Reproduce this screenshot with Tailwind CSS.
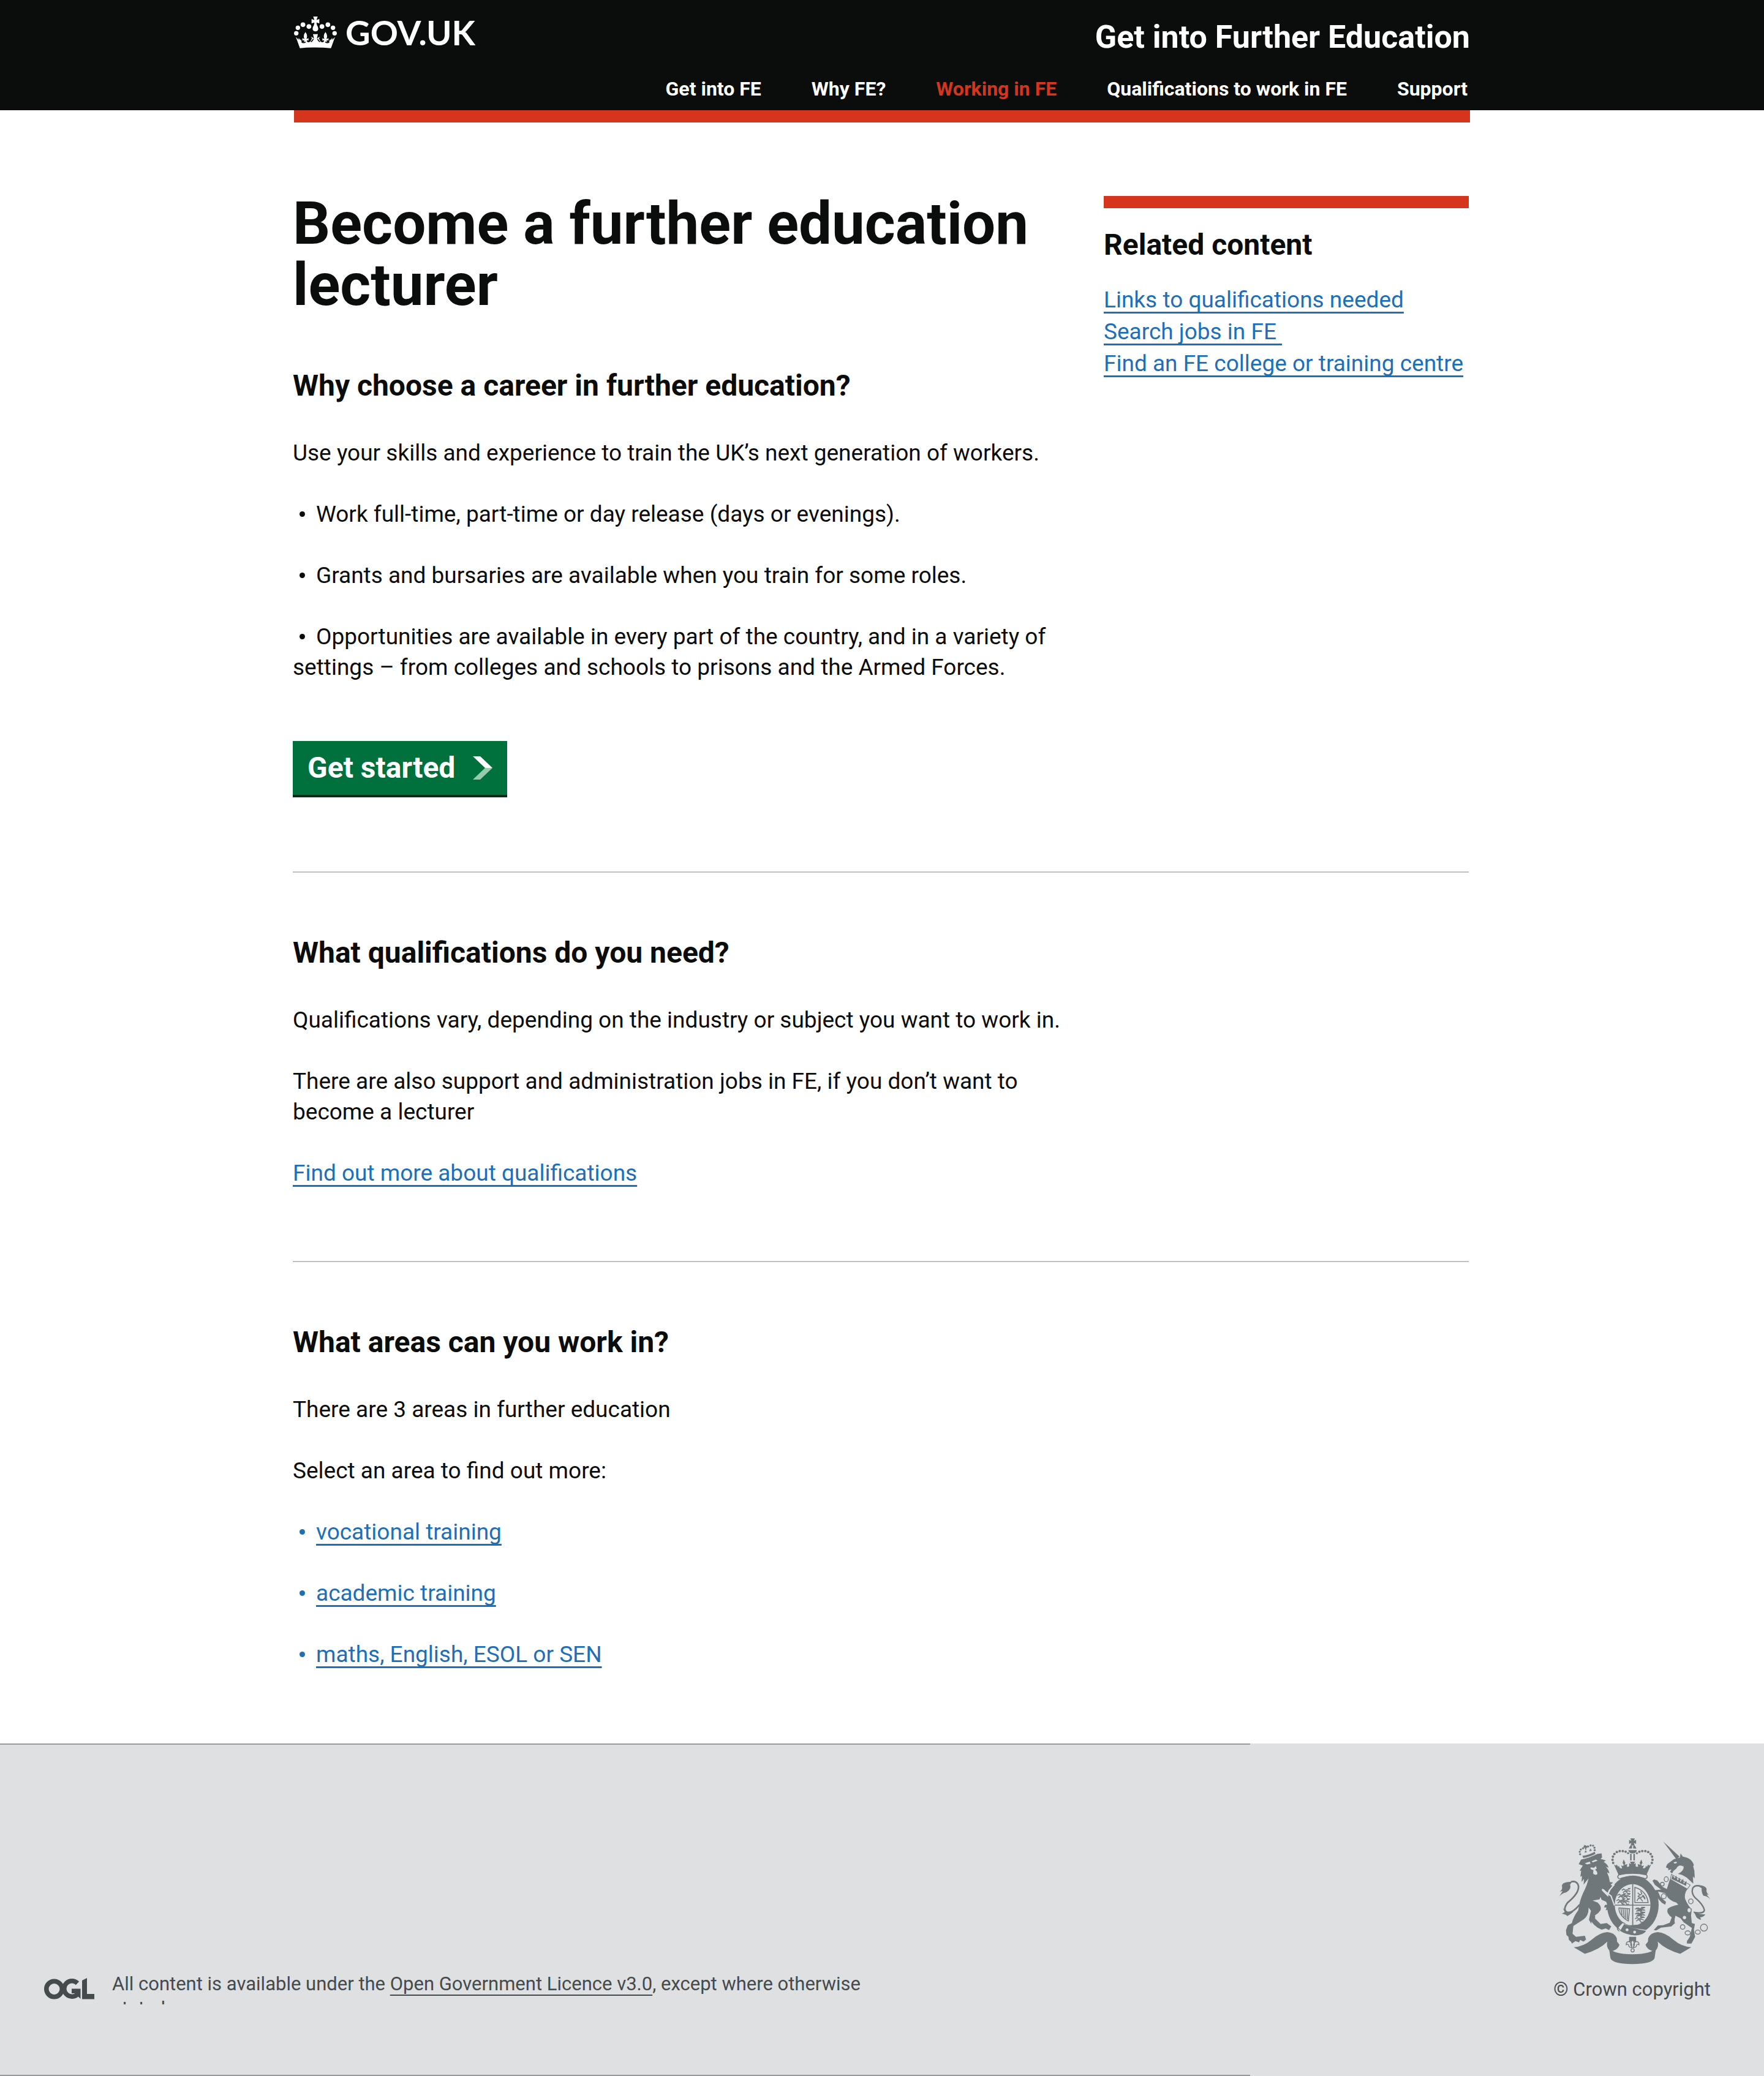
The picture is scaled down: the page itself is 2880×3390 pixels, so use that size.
<!DOCTYPE html>
<html lang="en">
<head>
<meta charset="utf-8">
<meta name="viewport" content="width=device-width, initial-scale=1">
<title>Become a further education lecturer - Get into Further Education - GOV.UK</title>
<script src="https://cdn.jsdelivr.net/npm/@tailwindcss/browser@4"></script>
</head>
<body class="flex min-h-screen flex-col bg-white font-[Roboto,'Liberation_Sans',sans-serif] text-[37px] leading-[50px] text-[#0b0c0c]">

<header class="bg-[#0b0c0c] text-white">
  <div class="mx-auto flex max-w-[1920px] items-start justify-between">
    <a href="#" class="flex items-center gap-[14px] pt-[23px]">
      <svg class="h-[52px] w-[70px]" viewBox="29 20 210 156" fill="#fff" aria-hidden="true">
        <circle cx="40" cy="102" r="11"/><circle cx="48" cy="75" r="11"/><circle cx="73" cy="60" r="11.5"/><circle cx="102" cy="69" r="11.5"/>
        <circle cx="228" cy="102" r="11"/><circle cx="220" cy="75" r="11"/><circle cx="195" cy="60" r="11.5"/><circle cx="166" cy="69" r="11.5"/>
        <path d="M123 20h22l-6 17 14-5v22l-14-5 2 12q8 12 7 20-2 12-14 12t-14-12q-1-8 7-20l2-12-14 5V32l14 5z"/>
        <path d="M38 120l13 14 1-10 8 12 2-6q4 16 12 16 8-2 4-10l-8 2v-12l10 4q-8-17 5-34 13 17 5 34l10-4v12l-8-2q-2 9 7 10 11 0 16-16l2-4-6-6q8 0 12 6l4 2-5-22h24l-5 22 4-2q4-6 12-6l-6 6 2 4q5 16 16 16 9-1 7-10l-8 2v-12l10 4q-8-17 5-34 13 17 5 34l10-4v12l-8-2q-4 8 4 10 8 0 12-16l2 6 8-12 1 10 13-14-20 55q-76-7-152 0z"/>
        <path d="M66 144q10 8 20 0M112 144q8-6 12-14M156 144q-8-6-12-14M182 144q10 8 20 0" fill="none" stroke="#0b0c0c" stroke-width="5"/>
      </svg>
      <span class="font-[Lato,sans-serif] text-[56px] leading-[60px] font-bold">GOV.UK</span>
    </a>
    <div class="flex flex-col items-end gap-[34px] pt-[31px] pb-[15px] font-bold">
      <a href="#" class="text-[52px] leading-[60px]">Get into Further Education</a>
      <nav aria-label="Main" class="flex gap-[82px] pr-[4px] text-[32px] leading-10">
        <a href="#">Get into FE</a>
        <a href="#">Why FE?</a>
        <a href="#" aria-current="page" class="text-[#d4351c]">Working in FE</a>
        <a href="#">Qualifications to work in FE</a>
        <a href="#">Support</a>
      </nav>
    </div>
  </div>
</header>
<div class="mx-auto h-5 w-full max-w-[1920px] bg-[#d4351c]"></div>

<main class="mx-auto w-full max-w-[1924px] grow pr-1">
  <section class="flex items-start justify-between gap-[52px] border-b-2 border-[#bfc1c3] pb-[121px]">
    <div class="flex-1 pt-[115px]">
      <h1 class="mb-[90px] text-[96px] leading-[100px] font-bold">Become a further education lecturer</h1>
      <h2 class="mb-[60px] text-[48px] leading-[50px] font-bold">Why choose a career in further education?</h2>
      <p class="mb-[50px]">Use your skills and experience to train the UK’s next generation of workers.</p>
      <ul class="mb-[95px] flex flex-col gap-[50px]">
        <li class="before:mr-[18px] before:mb-[6px] before:ml-[11px] before:inline-block before:size-[9px] before:rounded-full before:bg-current before:align-middle before:content-['']">Work full-time, part-time or day release (days or evenings).</li>
        <li class="before:mr-[18px] before:mb-[6px] before:ml-[11px] before:inline-block before:size-[9px] before:rounded-full before:bg-current before:align-middle before:content-['']">Grants and bursaries are available when you train for some roles.</li>
        <li class="before:mr-[18px] before:mb-[6px] before:ml-[11px] before:inline-block before:size-[9px] before:rounded-full before:bg-current before:align-middle before:content-['']">Opportunities are available in every part of the country, and in a variety of settings – from colleges and schools to prisons and the Armed Forces.</li>
      </ul>
      <button type="button" class="flex items-center gap-[29px] border-b-4 border-[#002d18] bg-[#00703c] px-[24px] text-[48px] leading-[88px] font-bold text-white">
        Get started
        <svg class="h-[38px] w-8" viewBox="0 0 32 38" aria-hidden="true"><path d="M0 0h12l20 19H20z" fill="#fff"/><path d="M20 19h12L12 38H0z" fill="#97cbae"/></svg>
      </button>
    </div>
    <aside class="mt-[120px] w-[596px] border-t-20 border-[#d4351c] pt-[35px]">
      <h2 class="mb-[39px] text-[48px] leading-[50px] font-bold">Related content</h2>
      <ul class="leading-[52px] whitespace-nowrap text-[#1d70b8]">
        <li><a href="#" class="underline decoration-[3px] underline-offset-[7px] [text-decoration-skip-ink:none]">Links to qualifications needed</a></li>
        <li><a href="#" class="underline decoration-[3px] underline-offset-[7px] [text-decoration-skip-ink:none]">Search jobs in FE&nbsp;</a></li>
        <li><a href="#" class="underline decoration-[3px] underline-offset-[7px] [text-decoration-skip-ink:none]">Find an FE college or training centre</a></li>
      </ul>
    </aside>
  </section>

  <section class="border-b-2 border-[#bfc1c3] pt-[106px] pb-[118px]">
    <div class="max-w-[1272px]">
      <h2 class="mb-[60px] text-[48px] leading-[50px] font-bold">What qualifications do you need?</h2>
      <p class="mb-[50px]">Qualifications vary, depending on the industry or subject you want to work in.</p>
      <p class="mb-[50px]">There are also support and administration jobs in FE, if you don’t want to become a lecturer</p>
      <p><a href="#" class="text-[#1d70b8] underline decoration-[3px] underline-offset-[7px] [text-decoration-skip-ink:none]">Find out more about qualifications</a></p>
    </div>
  </section>

  <section class="pt-[106px] pb-[120px]">
    <h2 class="mb-[60px] text-[48px] leading-[50px] font-bold">What areas can you work in?</h2>
    <p class="mb-[50px]">There are 3 areas in further education</p>
    <p class="mb-[50px]">Select an area to find out more:</p>
    <ul class="flex flex-col gap-[50px] text-[#1d70b8]">
      <li class="before:mr-[18px] before:mb-[6px] before:ml-[11px] before:inline-block before:size-[9px] before:rounded-full before:bg-current before:align-middle before:content-['']"><a href="#" class="underline decoration-[3px] underline-offset-[7px] [text-decoration-skip-ink:none]">vocational training</a></li>
      <li class="before:mr-[18px] before:mb-[6px] before:ml-[11px] before:inline-block before:size-[9px] before:rounded-full before:bg-current before:align-middle before:content-['']"><a href="#" class="underline decoration-[3px] underline-offset-[7px] [text-decoration-skip-ink:none]">academic training</a></li>
      <li class="before:mr-[18px] before:mb-[6px] before:ml-[11px] before:inline-block before:size-[9px] before:rounded-full before:bg-current before:align-middle before:content-['']"><a href="#" class="underline decoration-[3px] underline-offset-[7px] [text-decoration-skip-ink:none]">maths, English, ESOL or SEN</a></li>
    </ul>
  </section>
</main>

<footer class="bg-[#dee0e2] text-[31px] leading-10 text-[#454a4c]">
  <div class="h-[2px] w-[2041px] max-w-full bg-[#999]"></div>
  <div class="flex items-end justify-between pt-[153px] pr-[87px] pb-[115px] pl-[72px]">
    <div class="flex items-start gap-[29px]">
      <svg class="mt-[10px] h-[35px] w-[82px]" viewBox="0 0 82 35" role="img" aria-label="Open Government Licence" fill="#454a4c">
        <circle cx="16.5" cy="18" r="12.75" fill="none" stroke="#454a4c" stroke-width="7.5"/>
        <path d="M54.5 8.5A12.75 12.75 0 1 0 55 26" fill="none" stroke="#454a4c" stroke-width="7.5"/>
        <path d="M45 17.500h14.500V34L56 30.500 50 25H45zM62 4l8-4v26h12v8.500H62z"/>
      </svg>
      <p class="h-[53px] max-w-[1260px] overflow-hidden">All content is available under the <a href="#" class="underline decoration-2 underline-offset-[7px] [text-decoration-skip-ink:none]">Open Government Licence v3.0</a>, except where otherwise stated</p>
    </div>
    <a href="#" class="flex flex-col items-end gap-[21px] pb-1">
      <svg class="h-[206px] w-[249px]" viewBox="138 65 744 615" fill="#6f777b" aria-hidden="true">
        <!-- ribbon -->
        <path id="fold" d="M214 596Q262 592 300 560 342 523 378 522 412 524 424 552L425 568 437 584Q430 606 404 614L388 612Q370 592 378 568 340 606 268 628z"/>
        <use href="#fold" transform="matrix(-1 0 0 1 1001 0)"/>
        <path d="M385 595Q402 630 500 630T616 595L608 650Q596 678 500 678T393 650z"/>
        <!-- garter and shield -->
        <path fill-rule="evenodd" d="M502 246a126 143 0 1 0 .1 0zM501 288a87 101 0 1 1-.1 0z"/>
        <path d="M499 288h5v202h-5zM414 388h174v5H414z"/>
        <path d="M432 500L455 474Q475 496 520 505L572 512 535 545 470 545z" fill="#dee0e2"/>
        <path d="M440 516L460 482Q500 505 567 516 555 536 515 538 470 536 440 516zM490 488l34-2 2 16-30-6z"/>
        <path d="M436 518q-16-8-6-34 12-16 34-4" fill="none" stroke="#6f777b" stroke-width="4"/>
        <circle cx="474" cy="511" r="7" fill="#dee0e2"/><circle cx="511" cy="522" r="7" fill="#dee0e2"/>
        <g fill="none" stroke="#6f777b" stroke-width="4.500">
          <path id="beast" d="M448 318l10-6 8 6 12-4 12-6M454 330l8-8 10 4 4 8 12 0M466 324l14-4 10 4M478 308l10 4"/>
          <use href="#beast" y="26"/><use href="#beast" x="-4" y="52"/><use href="#beast" x="-22" y="25"/><use href="#beast" x="-26" y="51"/>
          <use href="#beast" x="65" y="92"/><use href="#beast" x="65" y="116"/><use href="#beast" x="65" y="139"/><use href="#beast" x="72" y="92"/><use href="#beast" x="72" y="116"/>
          <path d="M512 304V378H577Q568 320 512 304z"/>
          <path d="M522 370l8-14 12 4 8 12M526 330l10 10-8 8 14 6 12-10 8 14M540 322l6 12-8 8M548 342l14 20"/>
          <path d="M432 404l54 4-6 62M434 404q0 22 16 40t28 22M444 408l6 32M454 408l6 42M464 410l4 46M474 410l2 50"/>
        </g>
        <path d="M484 545h34v28l-17-10-17 10z"/>
        <g fill="none" stroke="#6f777b" stroke-width="4"><path d="M501 560q-16 18-4 36h8q12-18-4-36zM496 594q4-26-16-26-12 4-10 16 8-6 12 2 0 10 14 12zM506 594q-4-26 16-26 12 4 10 16-8-6-12 2 0 10-14 12z"/><circle cx="501" cy="611" r="8"/></g>
        <!-- centre crown -->
        <path d="M490 65h22l-5 12 11-5v20l-11-5 4 12h-20l4-12-11 5V72l11 5zM490 100h8v14h-16zM504 100h8l8 14h-16zM480 122h42q-4 16-21 16t-21-16zM489 140h7v32h-7zM505 140h7v32h-7z"/>
        <g id="arch"><circle cx="406" cy="184" r="6"/><circle cx="403" cy="169" r="6"/><circle cx="405" cy="154" r="6"/><circle cx="412" cy="141" r="6"/><circle cx="424" cy="131" r="6"/><circle cx="438" cy="127" r="6"/><circle cx="453" cy="127" r="6"/><circle cx="467" cy="130" r="6"/><circle cx="479" cy="137" r="5"/>
        <path d="M457 168l9 16-5 10 14-4-2 14 24-4 4 14v22q-38 0-68 8l-23-52 10 6 4-6 6 12 4-6q4 18 16 12l-5-14 9 4 4-6-6-10z"/></g>
        <use href="#arch" transform="matrix(-1 0 0 1 1001 0)"/>
        <path d="M488 178h26l-8 12 10-4v20l-10-4 8 14h-26l6-14-10 4v-20l10 4z"/>
        <path d="M434 242q67-14 134 0 10 12-4 20M436 262q-14-8-2-20M438 262q60-22 126 0" fill="none" stroke="#6f777b" stroke-width="5"/>
        <!-- lion -->
        <path d="M250 168Q290 160 330 140L350 138 352 158 344 164 370 172 360 180Q378 190 384 208L370 202Q384 216 388 236L376 230Q386 250 390 278L406 280 394 290 402 296Q384 316 378 332L360 312 350 318 378 346 400 364 404 382 414 400 408 418 396 408 398 418 382 411 370 416 374 402 362 402 366 390 378 388 372 374 350 364 344 350 340 362 306 368 330 378Q352 398 344 416 334 432 318 440V456L345 482 375 478 397 494 386 512 370 504 350 510 330 500 312 485 300 470V482L288 462Q292 440 298 418L286 402Q288 440 262 460L212 492 208 530 225 545 268 540 274 558 262 568 245 560 240 572 222 566 205 578 200 568 190 560 188 545 178 535 176 512 185 488 205 478Q210 450 236 415 242 370 260 330 278 298 286 260L262 290 264 262 252 278 254 248 246 252 250 222 242 222 258 198 238 190z"/>
        <path d="M268 186l24-8 4 10-18 4zM302 176l20-8 8 6-24 8zM296 206l16 2 10-8 4 12-8 6q14 10 10 22-12 6-20-4l2-16-14-6z" fill="#dee0e2"/>
        <path d="M384 322L412 290M352 312L396 346 412 392" fill="none" stroke="#dee0e2" stroke-width="6"/>
        <path d="M256 150q30-2 60-20l4 10q-30 16-60 20zM266 134l6-12 6 10zM290 128l4-14 8 10zM268 96l8 6 4-4v14l-6-2 2 10h-6l-2-10-6 2v-10z"/>
        <g><circle cx="245" cy="142" r="5"/><circle cx="243" cy="130" r="5"/><circle cx="248" cy="119" r="5"/><circle cx="259" cy="113" r="5"/><circle cx="284" cy="104" r="5"/><circle cx="296" cy="99" r="5"/><circle cx="308" cy="100" r="5"/><circle cx="315" cy="110" r="5"/><circle cx="316" cy="122" r="5"/></g>
        <path d="M243 388Q202 436 178 424 160 412 184 378 240 332 237 298 232 270 200 276" fill="none" stroke="#6f777b" stroke-width="8"/>
        <path d="M206 276Q158 276 156 296 162 312 146 324L160 322 138 356Q150 334 178 328 204 312 196 290zM160 404L176 422 212 424Q196 436 182 444 180 436 156 432L170 424z"/>
        <!-- unicorn -->
        <path d="M650 80L730 154 714 166zM735 138L746 154Q790 160 800 196L796 200Q806 226 803 260L795 250 797 286Q780 270 765 256 742 240 722 238 752 224 750 202 726 188 714 212L700 224 694 236 684 228 690 216 674 220 676 212 663 206 670 190 702 166 732 158z"/>
        <path d="M700 182l14-4 4 6-12 4z" fill="#dee0e2"/>
        <path d="M690 240L782 292 768 312 685 264z" fill="none" stroke="#6f777b" stroke-width="3"/>
        <path d="M690 262l6-18 10 16 8-14 6 24 12-14 2 22 14-16 2 24 14-14-2 24z"/>
        <path d="M683 264L768 312Q752 335 757 360 772 396 790 410L786 440 790 478 805 482 800 510 806 545 788 578 766 578 766 566 780 545 790 502 750 474 735 455 710 442Q702 470 708 478L690 494 640 500 616 514 604 512 624 490 650 488 682 476 692 450Q664 430 672 408 690 394 724 388L714 378Q680 370 664 340L660 332 625 324 636 350 664 375 660 388 645 380 626 360 606 318 640 314 610 292 598 272 606 265 622 270 645 300 668 312z"/>
        <g fill="none" stroke="#6f777b" stroke-width="4"><ellipse cx="665" cy="264" rx="10" ry="12"/><circle cx="646" cy="288" r="9"/><ellipse cx="653" cy="347" rx="12" ry="12" fill="#dee0e2"/><ellipse cx="785" cy="372" rx="11" ry="12" fill="#dee0e2"/><circle cx="745" cy="497" r="11"/><ellipse cx="770" cy="526" rx="13" ry="10"/><ellipse cx="819" cy="522" rx="12" ry="10"/><circle cx="849" cy="500" r="17"/></g>
        <ellipse cx="777" cy="415" rx="8" ry="10" fill="#dee0e2"/><circle cx="754" cy="451" r="8" fill="#dee0e2"/>
        <path d="M836 300Q806 288 794 308 786 334 806 354 846 388 851 414 850 434 800 426" fill="none" stroke="#6f777b" stroke-width="7"/>
        <path d="M814 292Q858 294 862 312 858 328 872 340L862 338 880 362Q866 346 846 344 836 326 838 308zM798 420L830 434 856 436Q848 448 830 450L836 462Q812 458 808 440z"/>
      </svg>
      <span>© Crown copyright</span>
    </a>
  </div>
  <div class="h-[2px] w-[2041px] max-w-full bg-[#999]"></div>
</footer>
</body>
</html>
